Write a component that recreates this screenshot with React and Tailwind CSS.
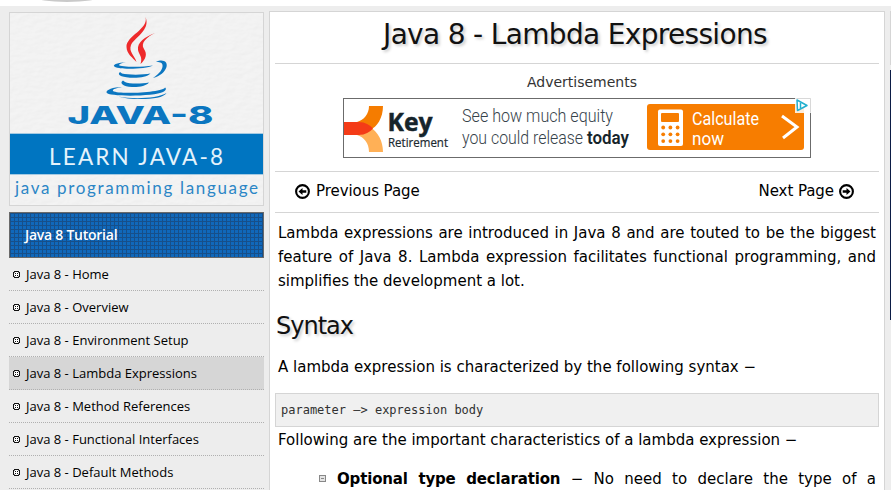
import React from "react";

const menu = [
  "Java 8 - Home",
  "Java 8 - Overview",
  "Java 8 - Environment Setup",
  "Java 8 - Lambda Expressions",
  "Java 8 - Method References",
  "Java 8 - Functional Interfaces",
  "Java 8 - Default Methods",
];

function Logo() {
  return (
    <svg width="255" height="194" viewBox="0 0 255 194" className="block shrink-0">
      <defs>
        <filter id="plaster" x="0" y="0" width="100%" height="100%">
          <feTurbulence type="fractalNoise" baseFrequency="0.1 0.2" numOctaves="3" seed="4" />
          <feDiffuseLighting surfaceScale="0.5" diffuseConstant="1.07" lightingColor="#ffffff">
            <feDistantLight azimuth="230" elevation="61" />
          </feDiffuseLighting>
        </filter>
      </defs>
      <rect width="255" height="194" fill="#f0f0f0" />
      <rect width="255" height="194" filter="url(#plaster)" opacity="0.3" />
      <g fill="#ee2a2b">
        <path d="M136.500 5 C140 17 117 24 117.500 35 C117.700 42 124 46 127.500 50 C125.500 43 119.500 40 122 33 C125 26 142 18 136.500 5Z" />
        <path d="M146 21 C136 25 128 30 129 38 C130 43 134 45 131.500 52 C137 47 138.500 42 135 37 C131 31 138 25 146 21Z" />
      </g>
      <g fill="#0b76c0">
        <path d="M117 50 C109 51 104 52.500 105 54 C107 58 136 57.500 144 53.500 C132 55.500 111 55 110 53 C110 52 113 51 117 50Z" />
        <path d="M147 50 C154 46.500 159 50 157.500 55 C156 60 151 64 144 66 C151 61 154 57 153.500 53 C153 50 150 50 147 50Z" />
        <path d="M111 60 C108 62.500 111 65 121 65.700 C130 66.200 138 65 141.500 61.500 C134 63 119 63 113 61.500Z" />
        <path d="M114 68.500 C110 71 114 74.500 123 75 C131 75.200 137 74 140 70.500 C132 72 120 72 116 70Z" />
        <path d="M113 75 C104 75 97 78 97.500 80.500 C99 85 146 84.500 154 80 C158 78 157 76 156 75.500 C156 80 110 83 104 79 C103 77 108 76 113 75Z" />
        <path d="M109 84.500 C125 87.500 148 86.500 157.500 81 C153 89 120 88 109 84.500Z" />
      </g>
      <text x="58.500" y="111.500" textLength="146" lengthAdjust="spacingAndGlyphs" fontFamily="Inter, sans-serif" fontWeight="800" fontSize="24.500" fill="#0b76c0">JAVA-8</text>
      <rect y="121.500" width="255" height="41" fill="#0075c1" stroke="#b8d4e6" strokeWidth="0.700" />
      <text x="40" y="153" textLength="174" lengthAdjust="spacing" fontFamily="Lato, sans-serif" fontWeight="400" fontSize="22.500" fill="#e4f3fc">LEARN JAVA-8</text>
      <text x="6" y="182" textLength="243" lengthAdjust="spacing" fontFamily="Lato, sans-serif" fontSize="17" fill="#2b86c6">java programming language</text>
      <rect x="0.500" y="0.500" width="254" height="193" fill="none" stroke="#d5d5d5" />
    </svg>
  );
}

function Bullet() {
  return (
    <svg width="7" height="7" viewBox="0 0 7 7" className="block shrink-0" shapeRendering="crispEdges">
      <path fill="#fff" d="M1 1h5v5h-5z" />
      <path fill="#111" d="M1 0h5v1h-5zM1 6h5v1h-5zM0 1h1v5h-1zM6 1h1v5h-1zM2 2h1v1h-1zM4 2h1v1h-1zM2 4h1v1h-1zM4 4h1v1h-1z" />
      <path fill="#777" d="M1 1h1v1h-1zM5 1h1v1h-1zM1 5h1v1h-1zM5 5h1v1h-1z" />
    </svg>
  );
}

function Banner() {
  const dots = [0, 1, 2].flatMap((r) => [0, 1, 2].map((c) => [r, c]));
  return (
    <svg width="468" height="60" viewBox="0 0 468 60" className="block" fontFamily="'Open Sans', sans-serif">
      <rect x="0.500" y="0.500" width="467" height="59" fill="#fff" stroke="#6b6b6b" />
      <path fill="#f57c00" d="M26 8H40C40 20 34 29 27 32C24 27 19 25 14 24C21 22 26 16 26 8Z" />
      <path fill="#ffb056" d="M26 54H40C40 43 35 34 27 29C24 34 19 37 14 37C21 39 26 45 26 54Z" />
      <path fill="#f43b17" d="M1 24H16C22 24 27 27 30 30.500C27 34 22 37 16 37H1Z" />
      <text x="44.500" y="33" textLength="45" lengthAdjust="spacingAndGlyphs" fontWeight="700" fontSize="25" fill="#15242b" stroke="#15242b" strokeWidth="0.500">Key</text>
      <text x="45" y="49" textLength="60" lengthAdjust="spacingAndGlyphs" fontSize="12.500" fill="#1c292f" stroke="#1c292f" strokeWidth="0.200">Retirement</text>
      <g fontSize="18" fill="#36424a" fontFamily="Roboto, sans-serif">
        <text x="119" y="24" textLength="151" lengthAdjust="spacingAndGlyphs" fontWeight="300">See how much equity</text>
        <text x="119" y="46" textLength="121" lengthAdjust="spacingAndGlyphs" fontWeight="300">you could release</text>
        <text x="244" y="46" textLength="42" lengthAdjust="spacingAndGlyphs" fontWeight="600" fill="#15242b">today</text>
      </g>
      <rect x="304" y="6" width="157" height="46" rx="3" fill="#f77d00" />
      <rect x="315" y="11.500" width="25" height="36.500" rx="2" fill="#fff" />
      <rect x="318" y="15" width="18" height="9" rx="1" fill="#f77d00" />
      {dots.map(([r, c]) => (
        <circle key={`${r}${c}`} cx={320.2 + c * 7.2} cy={29.5 + r * 6.8} r="1.900" fill="#f77d00" />
      ))}
      <g fontSize="19" fill="#fff" fontFamily="Roboto, sans-serif">
        <text x="349" y="26.500" textLength="67" lengthAdjust="spacingAndGlyphs">Calculate</text>
        <text x="349" y="47" textLength="32" lengthAdjust="spacingAndGlyphs">now</text>
      </g>
      <path d="M439 18L454 29L440 40" fill="none" stroke="#fff" strokeWidth="3" />
      <rect x="452" y="0" width="16" height="15" fill="#fff" fillOpacity="0.850" />
      <path d="M454 0.500H467.500V14.500" fill="none" stroke="#d8d8d8" />
      <path d="M454 2L464 7.500L454.500 12.500Z" fill="#fff" stroke="#23b0cf" strokeWidth="1.500" strokeLinejoin="round" />
      <path d="M457.500 5V10" stroke="#23b0cf" strokeWidth="1.500" />
    </svg>
  );
}

function CircleArrow({ flip }) {
  return (
    <svg width="15" height="15" viewBox="0 0 15 15" className={flip ? "mt-px block -scale-x-100" : "block"}>
      <circle cx="7.500" cy="7.500" r="6.400" fill="none" stroke="#000" strokeWidth="2.100" />
      <path d="M3.500 7.500L7.500 4V6.300H11.300V8.700H7.500V11Z" />
    </svg>
  );
}

export default function App() {
  return (
    <div className="flex h-[490px] w-[891px] flex-col overflow-hidden bg-[#ededed] font-['DejaVu_Sans',Verdana,sans-serif] text-black">
      <div className="h-[6px] shrink-0 bg-white">
        <svg width="110" height="3" className="block"><ellipse cx="67" cy="-3" rx="32" ry="5" fill="#c9c9c9" /></svg>
      </div>
      <div className="flex min-h-0 flex-1">
        <aside className="ml-[9px] mt-[6px] w-[255px] shrink-0">
          <Logo />
          <div className="mt-[6px] flex h-[46px] items-center border border-[#6a6a6a] bg-[#1068bb] bg-[linear-gradient(to_right,#174f89_1px,transparent_1px),linear-gradient(to_bottom,#174f89_1px,transparent_1px)] bg-[size:4px_4px] pb-[2px] pl-[15px] font-['Open_Sans',sans-serif] text-[14px] font-semibold tracking-[-0.25px] text-white">
            Java 8 Tutorial
          </div>
          <ul className="font-['Open_Sans',sans-serif] text-[13px]">
            {menu.map((m, i) => (
              <li key={m} className={`flex h-[33px] items-center gap-[6px] border-b border-dotted border-[#b0b0b0] pl-[4px] ${i === 3 ? "bg-[#d6d6d6]" : ""}`}>
                <Bullet />
                <span className="whitespace-nowrap pt-[2px]">{m}</span>
              </li>
            ))}
          </ul>
        </aside>
        <main className="ml-[5px] mt-[5px] h-[479px] w-[616px] shrink-0 overflow-hidden border border-b-0 border-[#d5d5d5] bg-white px-[5px]">
          <h1 className="flex h-[52px] items-center justify-center whitespace-nowrap border-b border-[#d5d5d5] pb-[6px] pr-[4px] text-[28px] tracking-[-0.67px] text-[#111] [text-shadow:2px_2px_3px_#ccc]">Java 8 - Lambda Expressions</h1>
          <div className="flex h-[108px] flex-col items-center border-b border-[#d5d5d5]">
            <div className="flex h-[34px] items-center pl-[10px] pt-[2px] text-[14px] text-[#333]">Advertisements</div>
            <Banner />
          </div>
          <nav className="flex h-[41px] items-center justify-between border-b border-[#d5d5d5] pl-[20px] pr-[25px] text-[15px] tracking-[-0.06px]">
            <span className="flex items-center gap-[6px] pb-[2px]"><CircleArrow />Previous Page</span>
            <span className="flex items-center gap-[5px] pb-[2px]">Next Page<CircleArrow flip /></span>
          </nav>
          <p className="mt-[8px] px-[3px] text-justify text-[15px] leading-[24px]">
            Lambda expressions are introduced in Java 8 and are touted to be the biggest feature of Java 8. Lambda expression facilitates functional programming, and simplifies the development a lot.
          </p>
          <h2 className="mt-[15px] pl-px text-[24px] leading-[36px] tracking-[-1px] text-[#111] [text-shadow:2px_2px_3px_#ccc]">Syntax</h2>
          <p className="mt-[11px] px-[3px] text-[15px] leading-[24px]">A lambda expression is characterized by the following syntax −</p>
          <pre className="mt-[14px] h-[34px] border border-[#d5d5d5] bg-[#f0f0f0] pl-[5px] font-['DejaVu_Sans_Mono',monospace] text-[12px] leading-[32px] text-[#313131]">parameter –&gt; expression body</pre>
          <p className="mt-px px-[3px] text-[15px] leading-[24px]">Following are the important characteristics of a lambda expression −</p>
          <div className="mt-[16px] flex pl-[44px] pr-[3px]">
            <svg width="7" height="7" className="mt-[7px] block shrink-0"><rect x="0.500" y="0.500" width="6" height="6" fill="#e4e4e4" stroke="#888" /><path d="M2 3.500H5" stroke="#888" /></svg>
            <p className="ml-[11px] flex-1 whitespace-nowrap text-justify text-[15px] leading-[22px] [text-align-last:justify]"><b className="tracking-[-0.16px]">Optional type declaration</b> − No need to declare the type of a</p>
          </div>
        </main>
        <div className="ml-[5px] mt-[5px] w-px shrink-0">
          <div className="h-[54px] bg-[#d5d5d5]" />
          <div className="mt-[5px] h-[250px] bg-[#0b1c45]" />
        </div>
      </div>
    </div>
  );
}
